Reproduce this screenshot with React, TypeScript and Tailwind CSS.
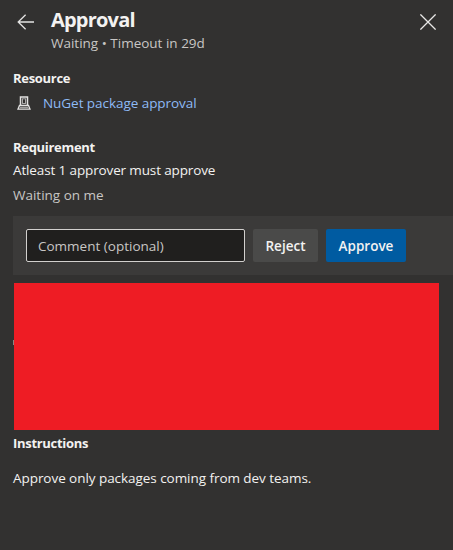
import type { ReactNode } from "react";

function BackIcon() {
  return (
    <svg className="block h-4 w-[18px]" viewBox="0 0 18 16" fill="none" stroke="#e4e3e2" strokeWidth="1.3">
      <path d="M8.6 0.8 L1.2 8 L8.6 15.2 M1.2 8 H17" />
    </svg>
  );
}

function CloseIcon() {
  return (
    <svg className="block h-4 w-4" viewBox="0 0 16 16" fill="none" stroke="#e8e7e6" strokeWidth="1.3">
      <path d="M0.4 0.4 L15.6 15.6 M15.6 0.4 L0.4 15.6" />
    </svg>
  );
}

// Small server box standing on a tray
function ResourceIcon() {
  return (
    <svg className="block h-[14px] w-[14px]" viewBox="0 0 14 14" fill="none" stroke="#e2e1e0">
      <path d="M3.5 10 V0.9 H10.5 V10" strokeWidth="1.5" />
      <rect x="5.5" y="2.8" width="3" height="4.7" stroke="#a9a8a7" strokeWidth="1" />
      <path d="M2.5 9.5 H11.5 L13 13.2 H1 Z" strokeWidth="1.3" />
      <path d="M3 11.4 H11" stroke="#a9a8a7" strokeWidth="1" />
    </svg>
  );
}

function Heading({ children }: { children: ReactNode }) {
  return <h2 className="h-5 text-[13px] leading-5 font-bold tracking-[-0.3px] text-[#f3f2f1]">{children}</h2>;
}

export default function App() {
  return (
    <main className="flex h-[550px] w-[453px] flex-col overflow-hidden whitespace-nowrap bg-[#323130] font-['Open_Sans','Noto_Sans',sans-serif] text-[13.5px] leading-5 text-[#f3f2f1]">
      <header className="flex h-[68px] shrink-0 pr-[17px] pl-[17px]">
        <button type="button" aria-label="Back" className="mt-[14px] h-4">
          <BackIcon />
        </button>
        <div className="ml-4 flex-1 pt-[7px]">
          <h1 className="h-[26px] text-[20px] leading-[26px] font-bold tracking-[-0.8px]">Approval</h1>
          <p className="text-[#c8c6c4]">Waiting • Timeout in 29d</p>
        </div>
        <button type="button" aria-label="Close" className="mt-[14px] h-4">
          <CloseIcon />
        </button>
      </header>

      <section className="h-[69px] shrink-0 pl-[13px]">
        <Heading>Resource</Heading>
        <div className="mt-[5px] flex items-center">
          <span className="ml-1">
            <ResourceIcon />
          </span>
          <a href="#" className="ml-3 tracking-[-0.05px] text-[#8ebaf5]">NuGet package approval</a>
        </div>
      </section>

      <section className="h-[78px] shrink-0 pl-[13px]">
        <Heading>Requirement</Heading>
        <p className="mt-[3px] tracking-[-0.13px]">Atleast 1 approver must approve</p>
        <p className="mt-[5px] text-[#c8c6c4]">Waiting on me</p>
      </section>

      <form className="mt-px ml-[13px] flex h-[59px] shrink-0 items-center gap-2 bg-[#3b3a39] pl-[13px]">
        <input
          placeholder="Comment (optional)"
          className="h-[33px] w-[219px] rounded-[2px] border border-[#d2d0ce] bg-[#201f1e] px-[11px] placeholder:text-[#c8c6c4]"
        />
        <button type="button" className="h-[33px] w-[65px] rounded-[2px] bg-[#4a4a49] text-[13.5px] font-semibold">
          Reject
        </button>
        <button type="button" className="h-[33px] w-20 rounded-[2px] bg-[#005ba1] text-[13.5px] font-semibold">
          Approve
        </button>
      </form>

      <div className="mt-2 mr-[14px] ml-[13px] flex h-[147px] shrink-0 items-start">
        <span className="mt-[57px] h-[5px] w-px bg-[#8a8886]" />
        <div className="h-full flex-1 bg-[#ee1c24]" />
      </div>

      <section className="mt-[3px] pl-[13px]">
        <Heading>Instructions</Heading>
        <p className="mt-[15px] tracking-[-0.05px]">Approve only packages coming from dev teams.</p>
      </section>
    </main>
  );
}
